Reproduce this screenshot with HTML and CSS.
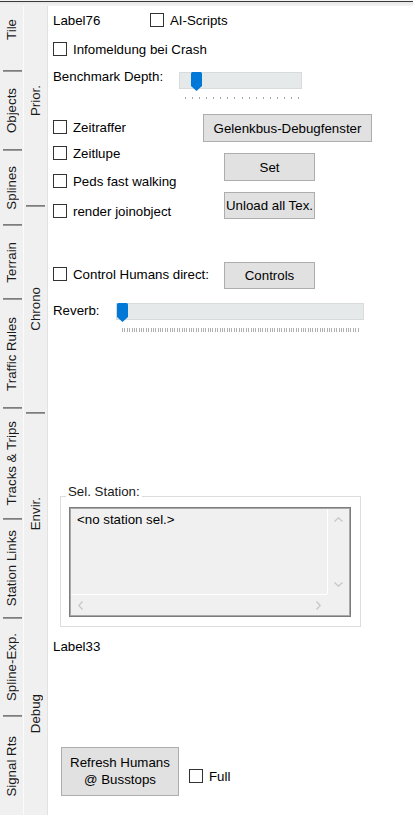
FILE: index.html
```html
<!DOCTYPE html>
<html>
<head>
<meta charset="utf-8">
<link rel="stylesheet" href="styles.css">
</head>
<body>
<div class="topbar"></div>
<div class="main">
  <div class="tabs tabs1">
    <div class="tab t-tile"><div class="tab-label"><span class="vt">Tile</span></div></div>
    <div class="tab t-objects"><div class="sep"></div><div class="tab-label"><span class="vt">Objects</span></div></div>
    <div class="tab t-splines"><div class="sep"></div><div class="tab-label"><span class="vt">Splines</span></div></div>
    <div class="tab t-terrain"><div class="sep"></div><div class="tab-label"><span class="vt">Terrain</span></div></div>
    <div class="tab t-traffic"><div class="sep"></div><div class="tab-label"><span class="vt">Traffic Rules</span></div></div>
    <div class="tab t-tracks"><div class="sep"></div><div class="tab-label"><span class="vt">Tracks &amp; Trips</span></div></div>
    <div class="tab t-station"><div class="sep"></div><div class="tab-label"><span class="vt">Station Links</span></div></div>
    <div class="tab t-splexp"><div class="sep"></div><div class="tab-label"><span class="vt">Spline-Exp.</span></div></div>
    <div class="tab t-signal"><div class="sep"></div><div class="tab-label"><span class="vt">Signal Rts</span></div></div>
  </div>
  <div class="tabs tabs2">
    <div class="tab t-prior"><div class="tab-label"><span class="vt">Prior.</span></div></div>
    <div class="tab t-chrono"><div class="sep sep2"></div><div class="tab-label"><span class="vt">Chrono</span></div></div>
    <div class="tab t-envir"><div class="sep sep2"></div><div class="tab-label"><span class="vt">Envir.</span></div></div>
    <div class="tab t-debug"><div class="tab-label"><span class="vt">Debug</span></div></div>
  </div>
  <div class="content">
    <div class="row row-a">
      <span class="lbl lbl76">Label76</span>
      <label class="check"><span class="box"></span><span class="ctext">AI-Scripts</span></label>
    </div>
    <div class="row row-b">
      <label class="check"><span class="box"></span><span class="ctext">Infomeldung bei Crash</span></label>
    </div>
    <div class="row row-c">
      <span class="lbl lbl-bench">Benchmark Depth:</span>
      <div class="slider slider1">
        <div class="track track1">
          <svg class="thumb thumb1" width="11" height="19" viewBox="0 0 11 19"><path d="M0 1.5 Q0 0 1.5 0 H9.5 Q11 0 11 1.5 V14 L5.5 19 L0 14 Z" fill="#0078d7"/></svg>
        </div>
        <div class="ticks1">
          <i></i><i></i><i></i><i></i><i></i><i></i><i></i><i></i><i></i><i></i><i></i><i></i><i></i><i></i><i></i><i></i><i></i>
        </div>
      </div>
    </div>
    <div class="block-d">
      <div class="col-left">
        <label class="check ck-zr"><span class="box"></span><span class="ctext">Zeitraffer</span></label>
        <label class="check ck-zl"><span class="box"></span><span class="ctext">Zeitlupe</span></label>
        <label class="check ck-peds"><span class="box"></span><span class="ctext">Peds fast walking</span></label>
        <label class="check ck-render"><span class="box"></span><span class="ctext">render joinobject</span></label>
      </div>
      <div class="col-right">
        <button class="btn btn-gelenk">Gelenkbus-Debugfenster</button>
        <button class="btn btn-small btn-set">Set</button>
        <button class="btn btn-small btn-unload">Unload all Tex.</button>
      </div>
    </div>
    <div class="row row-e">
      <div class="ctrl-wrap">
        <label class="check ck-ctrl"><span class="box"></span><span class="ctext">Control Humans direct:</span></label>
      </div>
      <button class="btn btn-controls">Controls</button>
    </div>
    <div class="row row-f">
      <span class="lbl lbl-reverb">Reverb:</span>
      <div class="slider slider2">
        <div class="track track2">
          <svg class="thumb thumb2" width="11" height="19" viewBox="0 0 11 19"><path d="M0 1.5 Q0 0 1.5 0 H9.5 Q11 0 11 1.5 V14 L5.5 19 L0 14 Z" fill="#0078d7"/></svg>
        </div>
        <div class="ticks2"></div>
      </div>
    </div>
    <div class="group">
      <div class="group-title">Sel. Station:</div>
      <div class="listbox">
        <div class="listbox-inner">
          <div class="lb-text">&lt;no station sel.&gt;</div>
          <div class="lb-v">
            <svg width="9" height="5" viewBox="0 0 9 5"><path d="M0.5 4.5 L4.5 0.8 L8.5 4.5" fill="none" stroke="#c6c6c6" stroke-width="1.2"/></svg>
            <svg width="9" height="5" viewBox="0 0 9 5"><path d="M0.5 0.5 L4.5 4.2 L8.5 0.5" fill="none" stroke="#c6c6c6" stroke-width="1.2"/></svg>
          </div>
          <div class="lb-h">
            <svg width="5" height="9" viewBox="0 0 5 9"><path d="M4.5 0.5 L0.8 4.5 L4.5 8.5" fill="none" stroke="#c6c6c6" stroke-width="1.2"/></svg>
            <svg width="5" height="9" viewBox="0 0 5 9"><path d="M0.5 0.5 L4.2 4.5 L0.5 8.5" fill="none" stroke="#c6c6c6" stroke-width="1.2"/></svg>
          </div>
          <div class="lb-corner"></div>
        </div>
      </div>
    </div>
    <div class="lbl lbl33">Label33</div>
    <div class="row row-g">
      <button class="btn btn-refresh">Refresh Humans<br>@ Busstops</button>
      <label class="check ck-full"><span class="box"></span><span class="ctext">Full</span></label>
    </div>
  </div>
</div>
</body>
</html>
```
FILE: styles.css
```css
html, body {
  margin: 0;
  padding: 0;
}
body {
  width: 413px;
  height: 815px;
  overflow: hidden;
  background: #fff;
  font-family: "Liberation Sans", Arial, sans-serif;
  font-size: 13.3px;
  color: #000;
}
.topbar {
  height: 6px;
  background: linear-gradient(#f2f2f2 0 1px, #3a3a3a 1px 2px, #e6e6e6 2px, #f4f4f4 6px);
}
.main {
  display: flex;
  height: 809px;
}
.tabs {
  width: 23px;
  flex: none;
  display: flex;
  flex-direction: column;
  background: #f0f0f0;
}
.tabs1 {
  border-right: 1px solid #fbfbfb;
}
.tabs2 {
  border-right: 1px solid #e2e2e2;
}
.tab {
  display: flex;
  flex-direction: column;
  box-sizing: border-box;
  flex: none;
}
.sep {
  height: 2px;
  flex: none;
  margin: 0 1px 0 3px;
  background: linear-gradient(#6f6f6f, #a8a8a8);
}
.sep2 {
  margin: 0 2px 0 2px;
}
.tab-label {
  flex: 1;
  display: flex;
  align-items: center;
  justify-content: center;
}
.vt {
  writing-mode: vertical-rl;
  transform: rotate(180deg);
  white-space: nowrap;
  line-height: 15px;
  color: #1a1a1a;
}
.t-tile { height: 64px; padding-bottom: 18px; }
.t-objects { height: 79px; }
.t-splines { height: 75px; }
.t-terrain { height: 74px; }
.t-traffic { height: 109px; }
.t-tracks { height: 111px; }
.t-station { height: 99px; }
.t-splexp { height: 98px; }
.t-signal { height: 100px; }
.t-prior { height: 199px; padding-bottom: 10px; }
.t-chrono { height: 205px; }
.t-envir { height: 203px; padding-top: 2px; }
.t-debug { height: 202px; }

.content {
  flex: 1;
  padding-left: 5px;
}
.row {
  display: flex;
}
.lbl {
  line-height: 15px;
  white-space: nowrap;
}
.check {
  display: flex;
  align-items: center;
  gap: 6px;
  height: 14px;
  white-space: nowrap;
}
.box {
  width: 14px;
  height: 14px;
  box-sizing: border-box;
  border: 1px solid #333;
  background: #fff;
  flex: none;
}
.ctext {
  line-height: 15px;
}
.row-a {
  margin-top: 7px;
  height: 14px;
  align-items: center;
}
.lbl76 {
  width: 97px;
}
.row-b {
  margin-top: 15px;
}
.row-c {
  margin-top: 13px;
  align-items: flex-start;
}
.lbl-bench {
  width: 126px;
}
.slider1 {
  margin-top: 3px;
}
.track {
  position: relative;
  height: 17px;
  box-sizing: border-box;
  background: #e6e9e9;
  border: 1px solid #d8dbdb;
}
.track1 {
  width: 123px;
}
.track2 {
  width: 248px;
}
.thumb {
  position: absolute;
  top: -1px;
  display: block;
}
.thumb1 {
  left: 11px;
}
.thumb2 {
  left: 0;
}
.ticks1 {
  margin: 8px 0 0 6px;
  width: 114px;
  height: 2px;
  display: flex;
  justify-content: space-between;
}
.ticks1 i {
  width: 1px;
  height: 2px;
  background: #a6a6a6;
}
.ticks2 {
  margin: 8px 0 0 6px;
  width: 238px;
  height: 4px;
  background: repeating-linear-gradient(to right, #b0b0b0 0 1px, transparent 1px 2.38px);
}
.block-d {
  margin-top: 15px;
  display: flex;
}
.col-left {
  width: 150px;
  display: flex;
  flex-direction: column;
}
.ck-zr { margin-top: 6px; }
.ck-zl { margin-top: 12px; }
.ck-peds { margin-top: 14px; }
.ck-render { margin-top: 16px; }
.col-right {
  display: flex;
  flex-direction: column;
  align-items: flex-start;
}
.btn {
  box-sizing: border-box;
  border: 1px solid #adadad;
  background: #e1e1e1;
  font-family: inherit;
  font-size: inherit;
  color: #000;
  padding: 0;
  margin: 0;
  line-height: 15px;
  display: flex;
  align-items: center;
  justify-content: center;
  white-space: nowrap;
}
.btn-gelenk {
  width: 169px;
  height: 28px;
}
.btn-small {
  width: 91px;
  margin-left: 21px;
  margin-top: 11px;
}
.btn-set {
  height: 28px;
}
.btn-unload {
  height: 27px;
}
.row-e {
  margin-top: 43px;
  align-items: flex-start;
}
.ctrl-wrap {
  width: 171px;
  padding-top: 5px;
}
.btn-controls {
  width: 91px;
  height: 27px;
}
.row-f {
  margin-top: 14px;
  align-items: flex-start;
}
.lbl-reverb {
  width: 63px;
}
.group {
  margin-top: 164px;
  margin-left: 7px;
  width: 301px;
  height: 131px;
  box-sizing: border-box;
  border: 1px solid #dcdcdc;
  padding-left: 8px;
}
.group-title {
  margin-top: -13px;
  margin-left: -3px;
  padding: 0 2px;
  width: fit-content;
  background: #fff;
  line-height: 15px;
  color: #1a1a1a;
}
.listbox {
  margin-top: 8px;
  width: 282px;
  height: 110px;
  box-sizing: border-box;
  border: 1px solid #7c7c7c;
}
.listbox-inner {
  height: 100%;
  box-sizing: border-box;
  border: 1px solid #a9a9a9;
  background: #f0f0f0;
  display: grid;
  grid-template-columns: 256px 22px;
  grid-template-rows: 85px 21px;
}
.lb-text {
  padding: 3px 0 0 6px;
  line-height: 15px;
  white-space: nowrap;
}
.lb-v {
  border-left: 1px solid #fff;
  display: flex;
  flex-direction: column;
  justify-content: space-between;
  align-items: center;
  padding: 8px 0 7px;
}
.lb-h {
  border-top: 1px solid #fff;
  display: flex;
  justify-content: space-between;
  align-items: center;
  padding: 0 6px 0 7px;
}
.lb-v svg, .lb-h svg {
  display: block;
}
.lbl33 {
  margin-top: 12px;
}
.row-g {
  margin-top: 93px;
  align-items: flex-start;
}
.btn-refresh {
  margin-left: 8px;
  width: 118px;
  height: 49px;
  line-height: 16.5px;
  text-align: center;
  flex-direction: column;
}
.ck-full {
  margin-left: 10px;
  margin-top: 22px;
}
```
